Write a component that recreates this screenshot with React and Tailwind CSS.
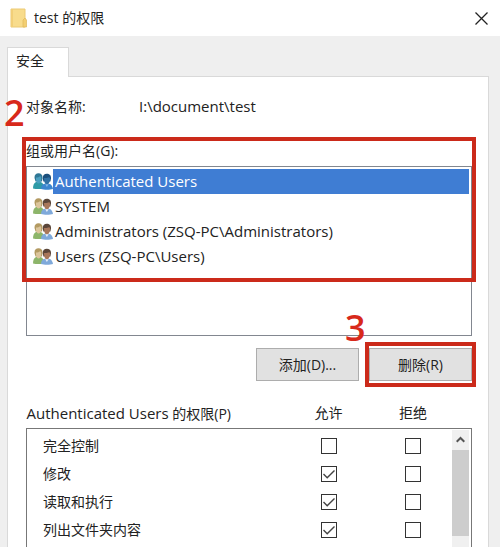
import { useState } from "react";

const users = [
  "Authenticated Users",
  "SYSTEM",
  "Administrators (ZSQ-PC\\Administrators)",
  "Users (ZSQ-PC\\Users)",
];

const initialPermissions = [
  { name: "完全控制", allow: false, deny: false },
  { name: "修改", allow: true, deny: false },
  { name: "读取和执行", allow: true, deny: false },
  { name: "列出文件夹内容", allow: true, deny: false },
];

function FolderIcon() {
  return (
    <svg width="18" height="21" viewBox="0 0 18 21" aria-hidden="true">
      <path d="M1 1h14v18H1z" fill="#f8dc8c" stroke="#ecca74" strokeWidth="1" />
      <path d="M1 1h2v18H1z" fill="#f2cf78" />
      <path d="M13 12l2-2 1.500 2v7H13z" fill="#f3cf72" stroke="#dfb75a" strokeWidth=".7" />
    </svg>
  );
}

function UsersIcon({ selected }) {
  const c = selected
    ? { hairL: "#2f7796", faceL: "#4c9fc0", bodyL: "#2f9aa6", hairR: "#1b4f7c", faceR: "#2f70a4", bodyR: "#3b86cf" }
    : { hairL: "#b39a62", faceL: "#dcc59c", bodyL: "#8db56a", hairR: "#5b4639", faceR: "#a9775a", bodyR: "#7fa9da" };

  return (
    <svg width="20" height="17" viewBox="0 0 20 17" aria-hidden="true" className="shrink-0">
      <path d="M0 15.500c0-3.500 1-5.500 3-6.500h4.500c2.500.5 3.500 3 3.500 6.500-3 .8-8 .8-11 0z" fill={c.bodyL} />
      <path d="M1.500 5C1.300 1.800 3 .3 5.500.3S9.700 1.800 9.500 5L9 8.500H2.500z" fill={c.hairL} />
      <path d="M3 4.500c1.700 0 3.200-.5 4.200-1.500.9.800 1.200 2 1 3.500C7.900 8.900 6.900 10.500 5.600 10.500S3.300 8.900 3 6.500z" fill={c.faceL} />
      <path d="M8 16c0-3 1.500-4.800 3.500-5.300h4.500c2.200.5 3.500 2.300 4 5.300-3 1-9 1-12 0z" fill={c.bodyR} />
      <path d="M9.800 5.500C9.500 2.300 11.200.7 13.800.7s4.500 1.600 4.200 4.800l-.6 3h-7z" fill={c.hairR} />
      <path d="M11 5c2.200.2 3.800-.2 5.200-1l.9 1.500c0 3.200-1.400 6-3.200 6S11 8.700 11 5z" fill={c.faceR} />
      <path d="M12.200 11.200l1.700 2.800 1.700-2.800z" fill={selected ? "#7fb5e6" : "#e8eef5"} />
    </svg>
  );
}

function PermissionBox({ label, checked, onChange }) {
  return (
    <label className="relative mx-auto block size-4">
      <input
        type="checkbox"
        aria-label={label}
        checked={checked}
        onChange={onChange}
        className="peer block size-4 appearance-none border border-[#333] bg-white"
      />
      <svg
        viewBox="0 0 16 16"
        className="pointer-events-none absolute inset-0 hidden size-4 peer-checked:block"
        aria-hidden="true"
      >
        <path d="M2.500 8l3.700 3.700L13.500 4.500" fill="none" stroke="#444" strokeWidth="1.400" />
      </svg>
    </label>
  );
}

export default function App() {
  const [selected, setSelected] = useState(0);
  const [permissions, setPermissions] = useState(initialPermissions);

  const toggle = (index, key) => {
    setPermissions((rows) =>
      rows.map((row, i) => (i === index ? { ...row, [key]: !row[key] } : row))
    );
  };

  return (
    <div className="flex h-screen flex-col overflow-hidden bg-[#efefef] font-['Open_Sans','Noto_Sans_CJK_SC',sans-serif] text-sm text-[#222]">
      {/* Title bar */}
      <header className="flex h-9 shrink-0 items-center bg-white pr-3 pl-2.5">
        <FolderIcon />
        <h1 className="ml-1.5 flex-1">test 的权限</h1>
        <button aria-label="关闭">
          <svg width="13" height="13" viewBox="0 0 13 13" aria-hidden="true">
            <path d="M.5.5l12 12M12.500.5l-12 12" stroke="#222" strokeWidth="1.300" />
          </svg>
        </button>
      </header>

      <div className="flex min-h-0 flex-1 flex-col pt-[11px] pr-[11px] pl-[7px]">
        <div role="tablist" className="flex">
          <button
            role="tab"
            aria-selected="true"
            className="z-10 -mb-px h-[30px] border border-b-0 border-[#d9d9d9] bg-white pr-6 pb-1 pl-2"
          >
            安全
          </button>
        </div>

        <main className="min-h-0 flex-1 border border-b-0 border-[#d9d9d9] bg-white pt-5 pr-4 pl-[18px]">
          <div className="relative flex h-5 items-center">
            <span className="absolute -top-1 -left-[22px] text-4xl leading-10 font-semibold text-[#d8291b]">
              2
            </span>
            <span className="w-[113px]">对象名称:</span>
            <span className="text-[15px]">I:\document\test</span>
          </div>

          {/* Groups and users */}
          <section className="relative mt-6">
            <h2 id="groups-label" className="h-[25px] leading-5">
              组或用户名(G):
            </h2>
            <ul
              role="listbox"
              aria-labelledby="groups-label"
              className="h-[170px] border border-[#828790] px-0.5 py-0.5 text-[15px]"
            >
              {users.map((user, i) => (
                <li
                  key={user}
                  role="option"
                  aria-selected={selected === i}
                  onClick={() => setSelected(i)}
                  className="flex h-[25px] items-center pl-1"
                >
                  <UsersIcon selected={selected === i} />
                  <span
                    className={
                      selected === i
                        ? "flex h-full flex-1 items-center bg-[#3f7dd3] pl-0.5 text-white"
                        : "flex h-full flex-1 items-center pl-0.5"
                    }
                  >
                    {user}
                  </span>
                </li>
              ))}
            </ul>
            <div className="pointer-events-none absolute -top-1 -right-1 -left-1 h-[145px] border-4 border-[#cb2a1a]" />
          </section>

          <div className="mt-3 flex justify-end gap-2.5">
            <button className="h-[33px] w-[103px] border border-[#adadad] bg-[#e1e1e1]">
              添加(D)...
            </button>
            <div className="relative">
              <button className="h-[33px] w-[103px] border border-[#adadad] bg-[#e1e1e1]">
                删除(R)
              </button>
              <div className="pointer-events-none absolute -inset-x-1 -inset-y-1.5 border-4 border-[#cb2a1a]" />
              <span className="absolute -top-10 -left-6 text-4xl leading-10 font-semibold text-[#d8291b]">
                3
              </span>
            </div>
          </div>

          {/* Permissions */}
          <table className="mt-[22px] w-full table-fixed">
            <colgroup>
              <col />
              <col className="w-[92px]" />
              <col className="w-[77px]" />
              <col className="w-5" />
            </colgroup>
            <thead>
              <tr className="h-[25px] align-top">
                <th className="text-left font-normal">
                  <span className="text-[15px] leading-5">Authenticated Users</span> 的权限(P)
                </th>
                <th className="font-normal">允许</th>
                <th className="font-normal">拒绝</th>
                <td />
              </tr>
            </thead>
            <tbody className="border border-[#777]">
              {permissions.map((row, i) => (
                <tr key={row.name} className={i === 0 ? "h-8" : "h-7"}>
                  <td className={i === 0 ? "pt-1 pl-4" : "pl-4"}>{row.name}</td>
                  <td className={i === 0 ? "pt-1" : ""}>
                    <PermissionBox
                      label={`${row.name} 允许`}
                      checked={row.allow}
                      onChange={() => toggle(i, "allow")}
                    />
                  </td>
                  <td className={i === 0 ? "pt-1" : ""}>
                    <PermissionBox
                      label={`${row.name} 拒绝`}
                      checked={row.deny}
                      onChange={() => toggle(i, "deny")}
                    />
                  </td>
                  {i === 0 && (
                    <td rowSpan={5} className="pt-px pr-0.5 align-top">
                      <div className="h-[140px] bg-[#f0f0f0]">
                        <button aria-label="向上滚动" className="flex h-5 w-full items-center justify-center">
                          <svg width="9" height="7" viewBox="0 0 9 7" aria-hidden="true">
                            <path d="M.7 5.800L4.500 2l3.800 3.800" fill="none" stroke="#555" strokeWidth="2" />
                          </svg>
                        </button>
                        <div className="h-[86px] bg-[#cdcdcd]" />
                      </div>
                    </td>
                  )}
                </tr>
              ))}
              <tr className="h-7">
                <td colSpan={3} />
              </tr>
            </tbody>
          </table>
        </main>
      </div>
    </div>
  );
}
